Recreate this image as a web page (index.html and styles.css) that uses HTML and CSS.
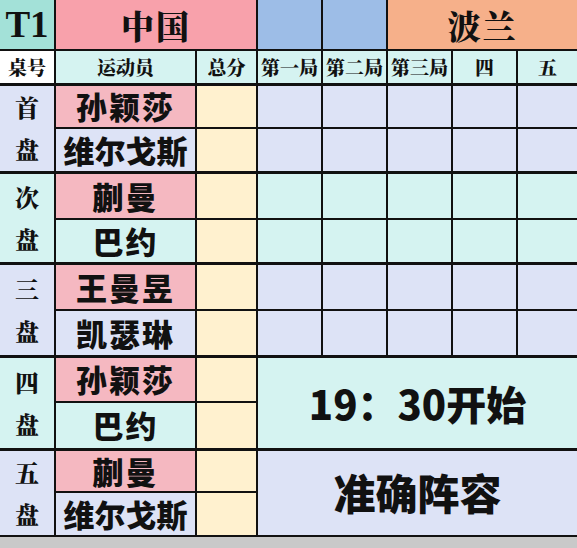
FILE: index.html
```html
<!DOCTYPE html>
<html lang="zh">
<head>
<meta charset="utf-8">
<link rel="stylesheet" href="styles.css">
</head>
<body>
<table class="board">
  <colgroup>
    <col class="c-side"><col class="c-name"><col class="c-total">
    <col class="c-g"><col class="c-g"><col class="c-g"><col class="c-g"><col class="c-last">
  </colgroup>
  <tr class="r-title">
    <td class="teal t1">T1</td>
    <td class="pink-h team" colspan="2">中国</td>
    <td class="blue"></td>
    <td class="blue"></td>
    <td class="orange team" colspan="3">波兰</td>
  </tr>
  <tr class="r-head">
    <td class="white hd">桌号</td>
    <td class="cyan hd">运动员</td>
    <td class="cyan hd">总分</td>
    <td class="cyan hd">第一局</td>
    <td class="cyan hd">第二局</td>
    <td class="cyan hd">第三局</td>
    <td class="cyan hd">四</td>
    <td class="cyan hd">五</td>
  </tr>

  <tr class="g-start h44">
    <td class="lav side" rowspan="2"><div>首</div><div>盘</div></td>
    <td class="pink name">孙颖莎</td>
    <td class="cream"></td>
    <td class="lav"></td><td class="lav"></td><td class="lav"></td><td class="lav"></td><td class="lav"></td>
  </tr>
  <tr class="h44">
    <td class="lav name four">维尔戈斯</td>
    <td class="cream"></td>
    <td class="lav"></td><td class="lav"></td><td class="lav"></td><td class="lav"></td><td class="lav"></td>
  </tr>

  <tr class="g-start h47">
    <td class="cyan side" rowspan="2"><div>次</div><div>盘</div></td>
    <td class="pink name">蒯曼</td>
    <td class="cream"></td>
    <td class="cyan"></td><td class="cyan"></td><td class="cyan"></td><td class="cyan"></td><td class="cyan"></td>
  </tr>
  <tr class="h44">
    <td class="cyan name">巴约</td>
    <td class="cream"></td>
    <td class="cyan"></td><td class="cyan"></td><td class="cyan"></td><td class="cyan"></td><td class="cyan"></td>
  </tr>

  <tr class="g-start h47">
    <td class="lav side" rowspan="2"><div>三</div><div>盘</div></td>
    <td class="pink name">王曼昱</td>
    <td class="cream"></td>
    <td class="lav"></td><td class="lav"></td><td class="lav"></td><td class="lav"></td><td class="lav"></td>
  </tr>
  <tr class="h46">
    <td class="lav name">凯瑟琳</td>
    <td class="cream"></td>
    <td class="lav"></td><td class="lav"></td><td class="lav"></td><td class="lav"></td><td class="lav"></td>
  </tr>

  <tr class="g-start h46">
    <td class="cyan side" rowspan="2"><div>四</div><div>盘</div></td>
    <td class="pink name">孙颖莎</td>
    <td class="cream"></td>
    <td class="cyan big" colspan="5" rowspan="2">19：30开始</td>
  </tr>
  <tr class="h47">
    <td class="cyan name">巴约</td>
    <td class="cream"></td>
  </tr>

  <tr class="g-start h43">
    <td class="lav side" rowspan="2"><div>五</div><div>盘</div></td>
    <td class="pink name">蒯曼</td>
    <td class="cream"></td>
    <td class="lav big wide" colspan="5" rowspan="2">准确阵容</td>
  </tr>
  <tr class="h43">
    <td class="lav name four">维尔戈斯</td>
    <td class="cream"></td>
  </tr>
</table>
</body>
</html>
```

FILE: styles.css
```css
html, body {
  margin: 0;
  padding: 0;
  background: #c9c9c9;
}

body {
  width: 577px;
  height: 548px;
  overflow: hidden;
  font-family: "Noto Sans CJK SC", "Noto Sans", sans-serif;
  color: #111;
}

.board {
  width: 577px;
  table-layout: fixed;
  border-collapse: collapse;
  border-style: hidden hidden solid hidden;
  border-bottom: 2px solid #111;
}

.c-side { width: 55px; }
.c-name { width: 141px; }
.c-total { width: 61px; }
.c-g { width: 65px; }
.c-last { width: 60px; }

.board td {
  border: 2px solid #111;
  padding: 0;
  text-align: center;
  vertical-align: middle;
  white-space: nowrap;
}

.r-title { height: 50px; }
.r-head { height: 34px; }
.r-head td { border-bottom-width: 3px; }
.g-start td { border-top-width: 3px; }
.h43 { height: 43px; }
.h44 { height: 44px; }
.h46 { height: 46px; }
.h47 { height: 47px; }

/* colours */
.teal { background: #a3e1d8; }
.pink-h { background: #f8a1ab; }
.blue { background: #9dbde7; }
.orange { background: #f6b08a; }
.white { background: #ffffff; }
.cyan { background: #d5f3f1; }
.lav { background: #dde3f6; }
.pink { background: #f5b8c1; }
.cream { background: #fff1cf; }

/* text */
.t1 {
  font-family: "Liberation Serif", serif;
  font-weight: 700;
  font-size: 37px;
  line-height: 1;
}

.team {
  font-family: "Noto Serif CJK SC", "Noto Sans CJK SC", serif;
  font-weight: 900;
  font-size: 33px;
  letter-spacing: 2px;
  line-height: 1;
}

.hd {
  font-family: "Noto Serif CJK SC", "Noto Sans CJK SC", serif;
  font-weight: 900;
  font-size: 19px;
  line-height: 1;
}

.side {
  font-family: "Noto Serif CJK SC", "Noto Sans CJK SC", serif;
  font-weight: 900;
  font-size: 24px;
  line-height: 42px;
}

.name {
  font-weight: 900;
  font-size: 31px;
  line-height: 1.1;
  letter-spacing: 2px;
}

.name.four {
  letter-spacing: 0;
}

.big {
  font-weight: 900;
  font-size: 40px;
  line-height: 1.1;
}

.big.wide {
  font-size: 42px;
}
```
